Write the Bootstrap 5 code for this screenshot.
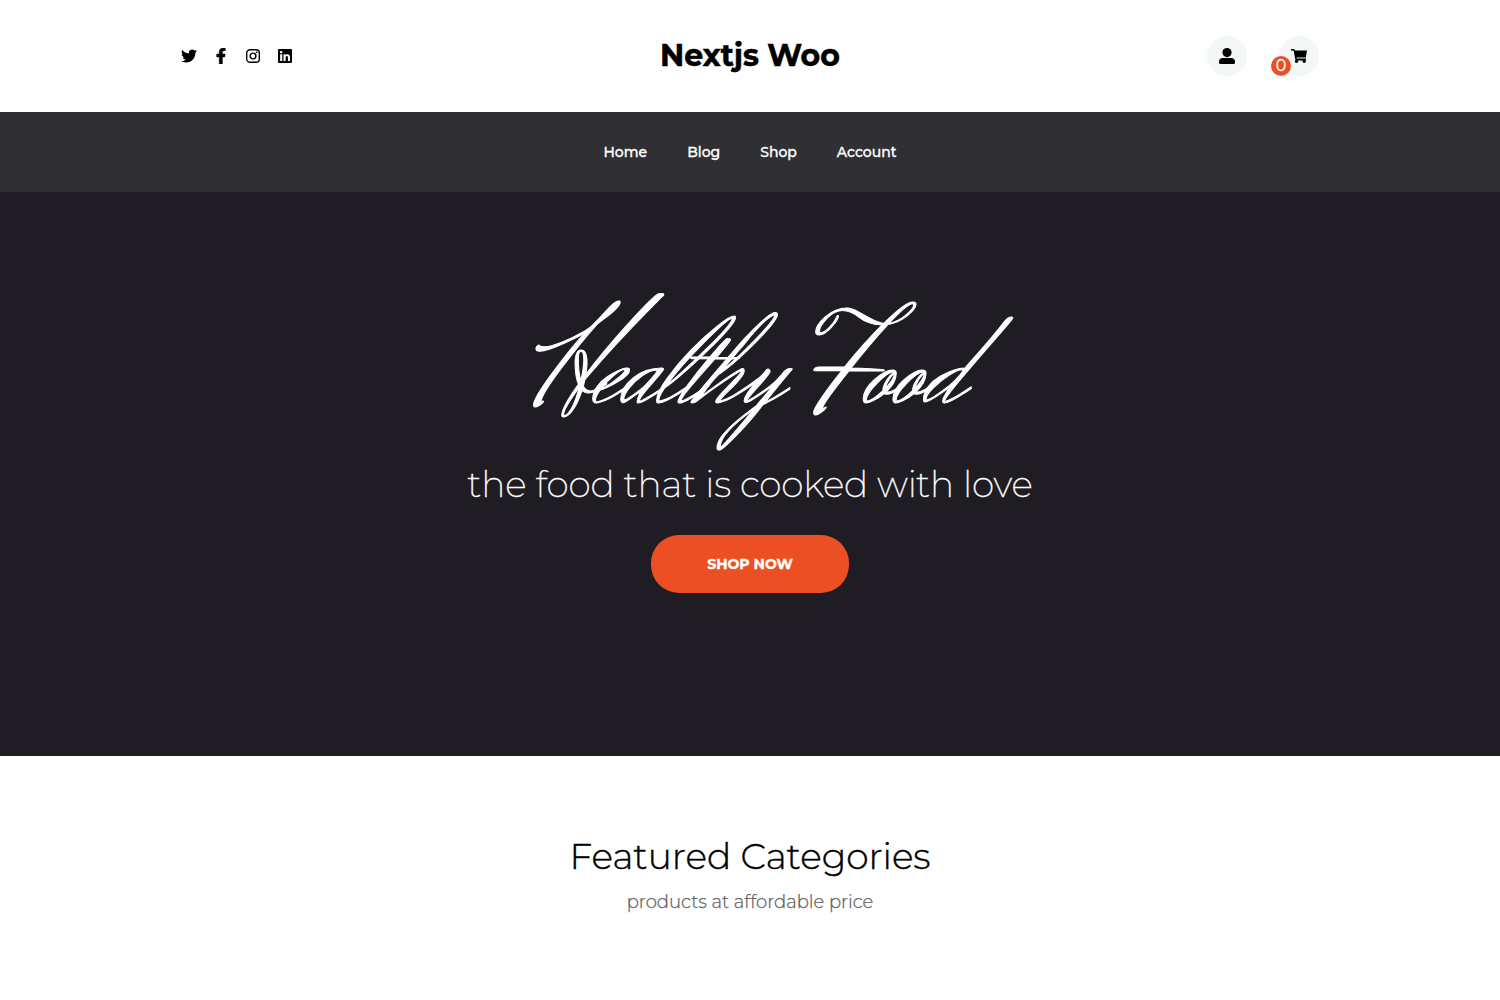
<!DOCTYPE html>
<html lang="en">
<head>
<meta charset="utf-8">
<meta name="viewport" content="width=device-width, initial-scale=1">
<title>Nextjs Woo</title>
<link href="https://cdn.jsdelivr.net/npm/bootstrap@5.3.0/dist/css/bootstrap.min.css" rel="stylesheet">
<style>
body{font-family:Montserrat,Inter,"Open Sans",sans-serif;color:#000;background:#fff;-webkit-font-smoothing:antialiased}
a{color:inherit;text-decoration:none}
svg{display:block;fill:currentColor}
.topbar{height:112px}
.wrap{width:1138px}
.side{width:200px}
.social{gap:16px}
.social a{width:16px;height:16px}
.site-name{font-size:30px;line-height:40px;font-weight:700;white-space:nowrap;margin-top:-1px;-webkit-text-stroke:.5px currentColor}
.round-btn{width:40px;height:40px;background:#f3f7f8}
.count{left:-8px;top:20px;width:20px;height:20px;background:#ed4f24;font-size:16px;line-height:20px;-webkit-text-stroke:.3px currentColor}
.mainnav{height:80px;background:#302f34}
.mainnav .nav{gap:40px}
.mainnav .nav-link{padding:0;color:#fff;font-size:14px;line-height:20px;font-weight:500;-webkit-text-stroke:.3px currentColor}
.hero{height:564px;background:#1f1c23;padding-top:92px}
.script-title{height:176px;font-family:"Herr Von Muellerhoff","Liberation Serif",cursive;font-weight:400;font-size:128px;line-height:184px;margin:0;white-space:nowrap;-webkit-text-stroke:1px currentColor}
.tagline{font-size:36px;line-height:48px;font-weight:200;letter-spacing:-.12px;margin:0;white-space:nowrap;-webkit-text-stroke:.35px currentColor}
.shop-btn{width:198px;height:58px;margin-top:27px;border-radius:28px;background:#ed4f24;font-size:14px;font-weight:700;-webkit-text-stroke:.4px currentColor}
.shop-btn:hover{background:#d9431b}
.featured{padding-top:76px}
.featured h2{font-size:36px;line-height:49px;font-weight:300;margin:0;-webkit-text-stroke:.4px currentColor}
.featured p{font-size:18px;line-height:24px;font-weight:300;color:#606060;margin:9px 0 0;-webkit-text-stroke:.25px currentColor}
</style>
</head>
<body>
<header class="topbar d-flex justify-content-center align-items-center">
<div class="wrap d-flex justify-content-between align-items-center">
<div class="side social d-flex">
<a href="#" aria-label="Twitter"><svg width="16" height="16" viewBox="0 0 512 512"><path d="M459.4 151.7c.3 4.5.3 9.1.3 13.6 0 138.7-105.6 298.6-298.6 298.6-59.5 0-114.7-17.2-161.1-47.1 8.4 1 16.6 1.3 25.3 1.3 49.1 0 94.2-16.6 130.3-44.8-46.1-1-84.8-31.2-98.1-72.8 6.5 1 13 1.6 19.8 1.6 9.4 0 18.8-1.3 27.6-3.6-48.1-9.7-84.1-52-84.1-103v-1.3c14 7.8 30.2 12.7 47.4 13.3-28.3-18.8-46.8-51-46.8-87.4 0-19.5 5.2-37.4 14.3-53 51.7 63.7 129.3 105.3 216.4 109.8-1.6-7.8-2.6-15.9-2.6-24 0-57.8 46.8-104.9 104.9-104.9 30.2 0 57.5 12.7 76.7 33.1 23.7-4.5 46.5-13.3 66.6-25.3-7.8 24.4-24.4 44.8-46.1 57.8 21.1-2.3 41.6-8.1 60.4-16.2-14.3 20.8-32.2 39.3-52.6 54.3z"/></svg></a>
<a href="#" aria-label="Facebook"><svg width="16" height="16" viewBox="0 0 320 512"><path stroke="currentColor" stroke-width="16" d="M279.1 288l14.3-92.7h-89V135.200c0-25.300 12.400-50.100 52.200-50.100h40.500V6.300S260.400 0 225.400 0c-73.200 0-121.100 44.400-121.100 124.700v70.600H22.900V288h81.400v224h100.200V288z"/></svg></a>
<a href="#" aria-label="Instagram"><svg width="16" height="16" viewBox="0 0 16 16"><g fill="none" stroke="currentColor" stroke-width="1.4"><rect x="1.7" y="1.7" width="12.6" height="12.600" rx="3.400"/><circle cx="8" cy="8" r="2.900"/></g><circle cx="11.700" cy="4.300" r=".85"/></svg></a>
<a href="#" aria-label="LinkedIn"><svg width="16" height="16" viewBox="0 0 448 512"><path d="M416 32H31.900C14.300 32 0 46.500 0 64.300v383.400C0 465.500 14.300 480 31.900 480H416c17.600 0 32-14.500 32-32.300V64.300c0-17.800-14.400-32.300-32-32.300zM135.400 416H69V202.200h66.500V416zm-33.200-243c-21.300 0-38.500-17.300-38.500-38.500S80.900 96 102.200 96c21.200 0 38.500 17.300 38.500 38.500 0 21.300-17.200 38.500-38.500 38.500zm282.100 243h-66.400V312c0-24.800-.5-56.700-34.500-56.700-34.600 0-39.900 27-39.900 54.900V416h-66.400V202.200h63.700v29.200h.9c8.900-16.800 30.600-34.500 62.900-34.500 67.200 0 79.700 44.300 79.700 101.900V416z"/></svg></a>
</div>
<a href="#" class="site-name">Nextjs Woo</a>
<div class="side d-flex justify-content-end gap-4">
<a href="#" aria-label="Account" class="round-btn rounded-circle d-flex align-items-center justify-content-center"><svg width="16" height="16" viewBox="0 0 16 16"><circle cx="8" cy="4.600" r="4.600"/><path d="M3.500 10h9C14.500 10 16 11.500 16 14v.5q0 1.500-1.500 1.500h-13Q0 16 0 14.500V14c0-2.500 1.500-4 3.500-4z"/></svg></a>
<a href="#" aria-label="Cart" class="round-btn rounded-circle position-relative d-flex align-items-center justify-content-center ms-2"><svg width="16" height="16" viewBox="0 0 16 16"><path d="M0 1h3.400l.5 1.500H16L14.800 9.500H5.600l.2 1.100H15V12.400H4.500L2.600 2.500H0z"/><circle cx="5.500" cy="13.300" r="1.600"/><circle cx="13.200" cy="13.300" r="1.600"/></svg><span class="count position-absolute rounded-circle text-white text-center">0</span></a>
</div>
</div>
</header>
<nav class="mainnav d-flex justify-content-center align-items-center">
<div class="nav"><a class="nav-link" href="#">Home</a><a class="nav-link" href="#">Blog</a><a class="nav-link" href="#">Shop</a><a class="nav-link" href="#">Account</a></div>
</nav>
<main>
<section class="hero text-white d-flex flex-column align-items-center">
<h1 class="script-title">Healthy Food</h1>
<p class="tagline">the food that is cooked with love</p>
<a href="#" class="shop-btn d-flex align-items-center justify-content-center">SHOP NOW</a>
</section>
<section class="featured text-center"><h2>Featured Categories</h2><p>products at affordable price</p></section>
</main>
<script src="https://cdn.jsdelivr.net/npm/bootstrap@5.3.0/dist/js/bootstrap.bundle.min.js"></script>
</body>
</html>
